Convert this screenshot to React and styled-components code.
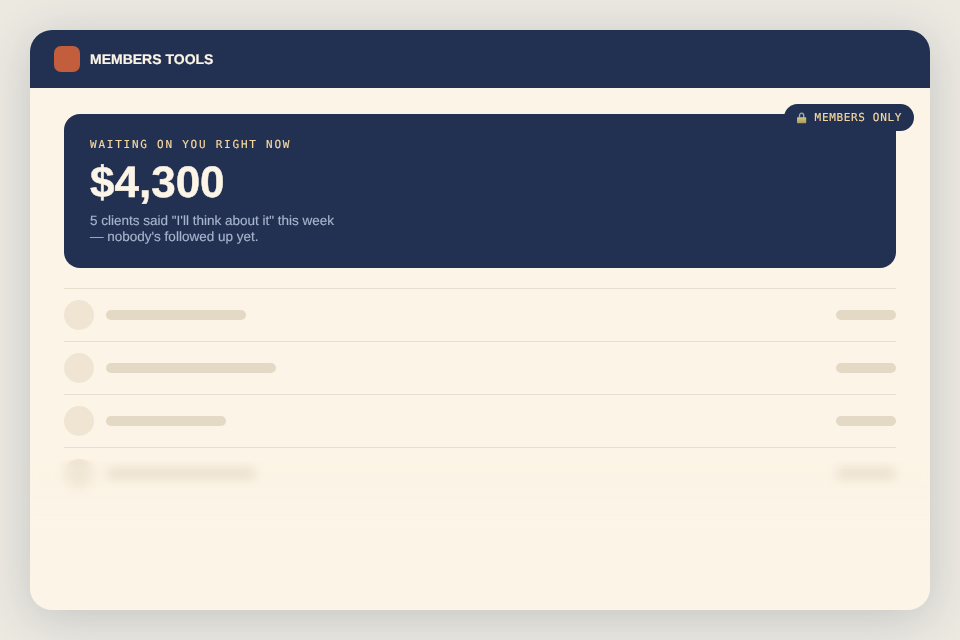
import React from "react";
import styled, { createGlobalStyle } from "styled-components";

const Global = createGlobalStyle`
  html, body { margin: 0; padding: 0; width: 100%; height: 100%; background: #ece9e1; overflow: hidden; }
  body { font-family: "Liberation Sans", Arial, sans-serif; text-rendering: geometricPrecision; }
`;
const Stage = styled.div`
  width: 960px; height: 640px; padding: 30px; box-sizing: border-box;
  background: #ece9e1;
`;
const Card = styled.div`
  width: 900px; height: 580px; border-radius: 22px;
  box-shadow: 0 8px 48px rgba(35,50,82,0.2);
`;
const Surface = styled.div`
  position: relative; height: 100%; border-radius: 22px; overflow: hidden;
  background: #fcf4e6; will-change: transform;
`;
const Header = styled.header`
  height: 58px; background: #223152; display: flex; align-items: center; gap: 10px; padding: 0 24px;
`;
const Logo = styled.div`
  width: 26px; height: 26px; border-radius: 7px; background: #c25e3c;
`;
const Title = styled.div`
  color: #fcf4e6; font-size: 14px; font-weight: 700; -webkit-text-stroke: 0.2px #fcf4e6;
`;
const Body = styled.main`
  padding: 26px 34px 0;
`;
const Hero = styled.section`
  height: 154px; box-sizing: border-box; background: #223152; border-radius: 16px; padding: 24px 26px;
  margin-bottom: 20px;
`;
const Eyebrow = styled.div`
  font-family: "DejaVu Sans Mono", monospace; font-size: 11px; line-height: 13px; letter-spacing: 1.76px; color: #f5d79e;
  -webkit-text-stroke: 0.15px #f5d79e;
`;
const Amount = styled.div`
  font-size: 44px; font-weight: 700; line-height: 52px; color: #fcf4e6; margin-top: 6px;
  -webkit-text-stroke: 0.5px #fcf4e6;
`;
const Note = styled.div`
  font-size: 13.5px; line-height: 16px; color: #a8b4cc; margin-top: 4px;
  -webkit-text-stroke: 0.15px #a8b4cc;
`;
const Badge = styled.div`
  position: absolute; top: 74px; right: 16px; height: 27px; padding: 0 12px; display: flex; align-items: center; gap: 8px;
  background: #223152; border-radius: 14px; color: #f5d79e;
  font-family: "DejaVu Sans Mono", monospace; font-size: 11px; letter-spacing: 0.66px;
  -webkit-text-stroke: 0.15px #f5d79e;
`;
const Row = styled.div`
  display: flex; align-items: center; gap: 12px; padding: 11px 0; border-top: 1px solid #e6dfd0;
`;
const Avatar = styled.div`
  width: 30px; height: 30px; border-radius: 50%; background: #f0e5d3; flex: none;
`;
const Bar = styled.div`
  height: 10px; border-radius: 5px; background: #e4d9c5; width: ${p => p.$w}px;
`;
const Amt = styled(Bar)`
  margin-left: auto;
`;
const Fade = styled.div`
  position: absolute; left: 0; right: 0; top: 430px; height: 70px;
  backdrop-filter: blur(6px);
  background: linear-gradient(to bottom, rgba(252,244,230,0) 0%, rgba(252,244,230,0.25) 40%, rgba(252,244,230,1) 100%);
`;
const rows = [140, 170, 120, 150];

function Lock() {
  return (
    <svg width="11" height="12" viewBox="0 0 11 12">
      <defs>
        <linearGradient id="lockBody" x1="0" y1="0" x2="0" y2="1">
          <stop offset="0" stopColor="#d3c67e" />
          <stop offset="1" stopColor="#a89c5c" />
        </linearGradient>
      </defs>
      <path d="M3.5 6V3.4a2.1 2.1 0 0 1 4.2 0V6" fill="none" stroke="#9fa3a3" strokeWidth="1.4" />
      <rect x="1" y="5.2" width="9.2" height="6" rx="0.7" fill="url(#lockBody)" />
    </svg>
  );
}

export default function App() {
  return (
    <Stage>
      <Global />
      <Card>
        <Surface>
          <Header>
            <Logo />
            <Title>MEMBERS TOOLS</Title>
          </Header>
          <Body>
            <Hero>
              <Eyebrow>WAITING ON YOU RIGHT NOW</Eyebrow>
              <Amount>$4,300</Amount>
              <Note>5 clients said "I'll think about it" this week<br />— nobody's followed up yet.</Note>
            </Hero>
            {rows.map((w, i) => (
              <Row key={i}>
                <Avatar />
                <Bar $w={w} />
                <Amt $w={60} />
              </Row>
            ))}
          </Body>
          <Badge><Lock />MEMBERS ONLY</Badge>
          <Fade />
        </Surface>
      </Card>
    </Stage>
  );
}
